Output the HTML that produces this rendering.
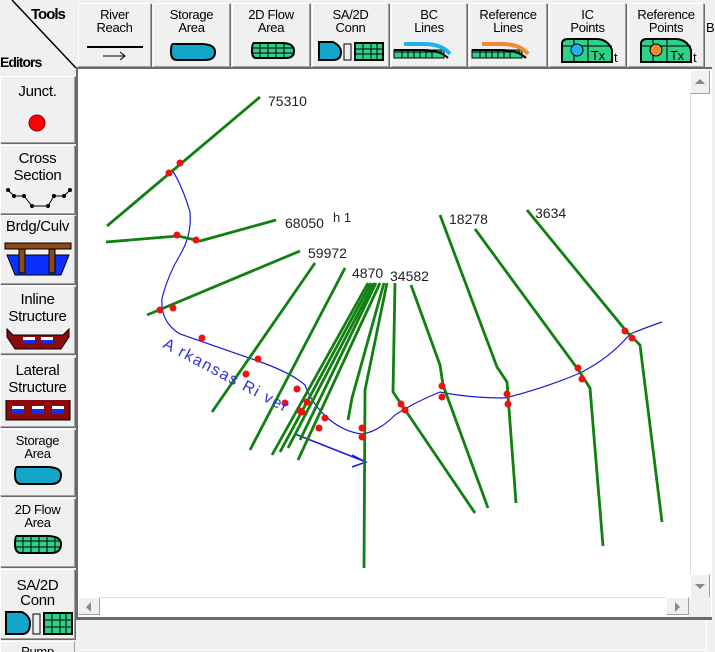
<!DOCTYPE html>
<html><head><meta charset="utf-8"><style>
html,body{margin:0;width:715px;height:652px;background:#f0f0f0;position:relative;overflow:hidden;font-family:"Liberation Sans",sans-serif;}
.b{position:absolute;background:#f0f0f0;border:1px solid #fff;border-right-color:#a0a0a0;border-bottom-color:#a0a0a0;box-shadow:1px 1px 0 #6a6a6a;text-align:center;font-size:13px;line-height:13px;color:#000;letter-spacing:-0.3px;overflow:hidden}
.t{position:absolute;left:0;right:0;top:4px}
svg{position:absolute}
</style></head><body>
<svg style="left:0;top:0" width="80" height="72"><line x1="12" y1="0" x2="76" y2="68" stroke="#000" stroke-width="1.5"/></svg>
<div style="position:absolute;left:31px;top:6px;font-weight:bold;font-size:15px;letter-spacing:-1px">Tools</div>
<div style="position:absolute;left:0;top:54px;font-weight:bold;font-size:14px;letter-spacing:-1px">Editors</div>

<div class="b" style="left:78px;top:3px;width:71px;height:62px"><div class="t">River<br>Reach</div><svg style="left:8px;top:40px" width="56" height="16"><line x1="0" y1="3" x2="56" y2="3" stroke="#000" stroke-width="2"/><path d="M16 12H38M33 8L38 12L33 16" stroke="#000" fill="none"/></svg></div>
<div class="b" style="left:153px;top:3px;width:75px;height:62px"><div class="t">Storage<br>Area</div><svg style="left:15px;top:36px" width="48" height="22"><path d="M4 4H32Q46 4 46 12Q46 20 36 20H8Q2 20 2 12Q2 4 4 4Z" fill="#13a6c8" stroke="#000" stroke-width="2"/></svg></div>
<div class="b" style="left:232px;top:3px;width:76px;height:62px"><div class="t">2D Flow<br>Area</div><svg style="left:17px;top:36px" width="46" height="20"><path d="M4 3H32Q44 3 44 11Q44 18 36 18H6Q2 18 2 11Q2 3 4 3Z" fill="#2fd08a" stroke="#000" stroke-width="2"/><path d="M2 8H44M2 13H44M10 3V18M18 3V18M26 3V18M34 3V18" stroke="#000"/></svg></div>
<div class="b" style="left:312px;top:3px;width:75px;height:62px"><div class="t">SA/2D<br>Conn</div><svg style="left:4px;top:36px" width="68" height="22"><path d="M2 2H16Q24 6 24 12Q24 20 16 20H2Z" fill="#13a6c8" stroke="#000" stroke-width="2"/><rect x="27" y="4" width="7" height="16" fill="#eee" stroke="#000"/><rect x="38" y="3" width="28" height="17" fill="#2fd08a" stroke="#000" stroke-width="2"/><path d="M38 9H66M38 14H66M46 3V20M54 3V20M60 3V20" stroke="#000"/></svg></div>
<div class="b" style="left:391px;top:3px;width:74px;height:62px"><div class="t">BC<br>Lines</div><svg style="left:0px;top:34px" width="74" height="24"><rect x="2" y="12" width="50" height="8" fill="#2fd08a" stroke="#000"/><path d="M2 14H50M10 12V20M16 12V20M22 12V20M28 12V20M34 12V20M40 12V20" stroke="#000"/><path d="M2 12H30Q48 12 56 20" stroke="#000" stroke-width="2" fill="none"/><path d="M12 6H32Q50 6 58 16" stroke="#20b0f0" stroke-width="4" fill="none"/></svg></div>
<div class="b" style="left:469px;top:3px;width:76px;height:62px"><div class="t">Reference<br>Lines</div><svg style="left:0px;top:34px" width="76" height="24"><rect x="2" y="12" width="50" height="8" fill="#2fd08a" stroke="#000"/><path d="M2 14H50M10 12V20M16 12V20M22 12V20M28 12V20M34 12V20M40 12V20" stroke="#000"/><path d="M2 12H30Q48 12 56 20" stroke="#000" stroke-width="2" fill="none"/><path d="M12 6H32Q50 6 58 16" stroke="#f08a30" stroke-width="4" fill="none"/></svg></div>
<div class="b" style="left:549px;top:3px;width:75px;height:62px"><div class="t">IC<br>Points</div><svg style="left:10px;top:32px" width="64" height="28"><path d="M2 26V8Q2 3 8 3H36Q48 3 52 14V26Z" fill="#2fd08a" stroke="#000" stroke-width="2"/><path d="M2 10H52M28 3V26M14 3V26" stroke="#000"/><circle cx="17" cy="14" r="6" fill="#20b0f0" stroke="#000"/><text x="31" y="24" font-size="13" font-family="Liberation Sans">Tx</text><text x="54" y="26" font-size="13" font-family="Liberation Sans">t</text></svg></div>
<div class="b" style="left:628px;top:3px;width:74px;height:62px"><div class="t">Reference<br>Points</div><svg style="left:10px;top:32px" width="64" height="28"><path d="M2 26V8Q2 3 8 3H36Q48 3 52 14V26Z" fill="#2fd08a" stroke="#000" stroke-width="2"/><path d="M2 10H52M28 3V26M14 3V26" stroke="#000"/><circle cx="17" cy="14" r="6" fill="#f08a30" stroke="#000"/><text x="31" y="24" font-size="13" font-family="Liberation Sans">Tx</text><text x="54" y="26" font-size="13" font-family="Liberation Sans">t</text></svg></div>
<div style="position:absolute;left:706px;top:20px;font-size:13px">B</div>

<div class="b" style="left:0;top:76px;width:73px;height:65px"><div class="t" style="top:8px;font-size:15px">Junct.</div><svg style="left:26px;top:36px" width="20" height="20"><circle cx="10" cy="10" r="8" fill="#f00" stroke="#900"/></svg></div>
<div class="b" style="left:0;top:145px;width:73px;height:67px"><div class="t" style="font-size:15px;line-height:17px">Cross<br>Section</div><svg style="left:3px;top:40px" width="68" height="26"><path d="M4 4L10 10H20L28 20H44L50 10H60L66 4" stroke="#000" fill="none"/><g fill="#000"><circle cx="4" cy="4" r="2"/><circle cx="10" cy="10" r="2"/><circle cx="20" cy="10" r="2"/><circle cx="28" cy="20" r="2"/><circle cx="44" cy="20" r="2"/><circle cx="50" cy="10" r="2"/><circle cx="60" cy="10" r="2"/><circle cx="66" cy="4" r="2"/></g></svg></div>
<div class="b" style="left:0;top:215px;width:73px;height:67px"><div class="t" style="font-size:15px">Brdg/Culv</div><svg style="left:2px;top:23px" width="70" height="38"><path d="M4 16H66L58 36H12Z" fill="#0a30ff" stroke="#000"/><rect x="2" y="4" width="66" height="6" fill="#8b4a1a" stroke="#000"/><rect x="16" y="10" width="6" height="24" fill="#8b4a1a" stroke="#000"/><rect x="46" y="10" width="6" height="24" fill="#8b4a1a" stroke="#000"/></svg></div>
<div class="b" style="left:0;top:286px;width:73px;height:66px"><div class="t" style="font-size:15px;line-height:17px">Inline<br>Structure</div><svg style="left:4px;top:40px" width="66" height="24"><path d="M2 2L8 8H58L64 2V10L56 22H10L2 10Z" fill="#8b0a0a" stroke="#000"/><rect x="18" y="10" width="12" height="6" fill="#fff"/><rect x="36" y="10" width="12" height="6" fill="#fff"/><rect x="18" y="13" width="12" height="3" fill="#0a30ff"/><rect x="36" y="13" width="12" height="3" fill="#0a30ff"/></svg></div>
<div class="b" style="left:0;top:357px;width:73px;height:68px"><div class="t" style="font-size:15px;line-height:17px">Lateral<br>Structure</div><svg style="left:3px;top:40px" width="68" height="26"><path d="M2 2V22H66V2" fill="#8b0a0a" stroke="#000"/><rect x="8" y="8" width="12" height="8" fill="#0a30ff"/><rect x="28" y="8" width="12" height="8" fill="#0a30ff"/><rect x="48" y="8" width="12" height="8" fill="#0a30ff"/><rect x="8" y="8" width="12" height="3" fill="#fff"/><rect x="28" y="8" width="12" height="3" fill="#fff"/><rect x="48" y="8" width="12" height="3" fill="#fff"/></svg></div>
<div class="b" style="left:0;top:429px;width:73px;height:65px"><div class="t">Storage<br>Area</div><svg style="left:12px;top:34px" width="50" height="22"><path d="M4 3H34Q48 3 48 11Q48 20 38 20H8Q2 20 2 11Q2 3 4 3Z" fill="#13a6c8" stroke="#000" stroke-width="2"/></svg></div>
<div class="b" style="left:0;top:498px;width:73px;height:67px"><div class="t">2D Flow<br>Area</div><svg style="left:12px;top:34px" width="50" height="22"><path d="M4 3H34Q48 3 48 11Q48 20 38 20H8Q2 20 2 11Q2 3 4 3Z" fill="#2fd08a" stroke="#000" stroke-width="2"/><path d="M2 8H48M2 14H48M10 3V20M18 3V20M26 3V20M34 3V20M42 3V20" stroke="#000"/></svg></div>
<div class="b" style="left:0;top:569px;width:73px;height:68px"><div class="t" style="top:8px;font-size:15px;line-height:15px">SA/2D<br>Conn</div><svg style="left:3px;top:40px" width="70" height="26"><path d="M2 2H18Q26 6 26 13Q26 24 18 24H2Z" fill="#13a6c8" stroke="#000" stroke-width="2"/><rect x="29" y="4" width="7" height="20" fill="#eee" stroke="#000"/><rect x="40" y="3" width="28" height="21" fill="#2fd08a" stroke="#000" stroke-width="2"/><path d="M40 10H68M40 17H68M48 3V24M56 3V24M62 3V24" stroke="#000"/></svg></div>
<div class="b" style="left:0;top:641px;width:73px;height:11px;border-bottom:none;box-shadow:none"><div class="t" style="top:3px">Pump</div></div>

<div style="position:absolute;left:76px;top:67px;width:634px;height:550px;border-top:2px solid #6a6a6a;border-left:2px solid #6a6a6a;background:#fff"></div>
<div style="position:absolute;left:690px;top:69px;width:20px;height:528px;background:#fff;border-left:1px solid #ddd"></div>
<div class="b" style="left:690px;top:70px;width:18px;height:22px;box-shadow:none"><svg style="left:4px;top:8px" width="10" height="6"><path d="M0 5L5 0L10 5Z" fill="#888"/></svg></div>
<div class="b" style="left:690px;top:574px;width:18px;height:22px;box-shadow:none"><svg style="left:4px;top:9px" width="10" height="6"><path d="M0 0L5 5L10 0Z" fill="#888"/></svg></div>
<div style="position:absolute;left:78px;top:597px;width:612px;height:18px;background:#fff;border-top:1px solid #ddd"></div>
<div class="b" style="left:78px;top:597px;width:20px;height:16px;box-shadow:none"><svg style="left:7px;top:4px" width="6" height="10"><path d="M5 0L0 5L5 10Z" fill="#888"/></svg></div>
<div class="b" style="left:666px;top:597px;width:21px;height:16px;box-shadow:none"><svg style="left:8px;top:4px" width="6" height="10"><path d="M0 0L5 5L0 10Z" fill="#888"/></svg></div>
<div style="position:absolute;left:689px;top:597px;width:22px;height:20px;background:#f0f0f0"></div>
<div style="position:absolute;left:76px;top:617px;width:636px;height:3px;background:#6a6a6a"></div>
<div style="position:absolute;left:78px;top:620px;width:628px;height:29px;background:#f0f0f0;border-bottom:1px solid #fff;border-right:1px solid #fff"></div>

<svg style="left:0;top:0" width="715" height="652">
<g fill="none" stroke="#1a1ae0" stroke-width="1.2">
<path d="M172 170Q182 185 190 212Q192 235 180 255Q168 275 162 298Q160 322 180 334Q215 346 255 360Q290 372 305 385Q312 405 330 420Q345 432 362 434Q378 432 395 415Q415 402 440 392Q470 398 505 398Q545 388 580 373Q610 358 630 334Q650 326 662 322"/>
<path d="M295 434L366 462M352 455L366 462L352 467" stroke-width="1.5"/>
</g>
<g fill="none" stroke="#108010" stroke-width="2.8">
<path d="M260 97L107 226"/>
<path d="M106 242L178 236L200 241L276 220"/>
<path d="M300 251L147 315"/>
<path d="M315 263L212 412"/>
<path d="M345 268L250 450"/>
<path d="M368 283L272 455"/>
<path d="M371 283L280 452"/>
<path d="M374 283L288 448"/>
<path d="M376 283L300 440"/>
<path d="M380 283L298 460"/>
<path d="M384 283L352 398L348 420"/>
<path d="M387 283L365 390L364 568"/>
<path d="M395 283L393 392L475 513"/>
<path d="M411 285L440 365L443 385L488 508"/>
<path d="M440 215L497 367L507 382L516 503"/>
<path d="M475 229L577 368L590 388L603 546"/>
<path d="M527 210L627 332L640 345L662 522"/>
</g>
<g fill="#f01010">
<circle cx="180" cy="163" r="3.5"/><circle cx="169" cy="173" r="3.5"/>
<circle cx="177" cy="235" r="3.5"/><circle cx="196" cy="240" r="3.5"/>
<circle cx="160" cy="310" r="3.5"/><circle cx="173" cy="308" r="3.5"/>
<circle cx="202" cy="338" r="3.5"/>
<circle cx="258" cy="359" r="3.5"/><circle cx="246" cy="374" r="3.5"/>
<circle cx="297" cy="389" r="3.5"/><circle cx="285" cy="403" r="3.5"/>
<circle cx="307" cy="402" r="3.5"/><circle cx="302" cy="412" r="3.5"/><circle cx="300" cy="411" r="3.5"/>
<circle cx="325" cy="418" r="3.5"/><circle cx="319" cy="428" r="3.5"/>
<circle cx="362" cy="428" r="3.5"/><circle cx="362" cy="437" r="3.5"/>
<circle cx="401" cy="404" r="3.5"/><circle cx="405" cy="410" r="3.5"/>
<circle cx="442" cy="386" r="3.5"/><circle cx="442" cy="397" r="3.5"/>
<circle cx="507" cy="394" r="3.5"/><circle cx="508" cy="404" r="3.5"/>
<circle cx="578" cy="368" r="3.5"/><circle cx="582" cy="379" r="3.5"/>
<circle cx="625" cy="331" r="3.5"/><circle cx="632" cy="338" r="3.5"/>
</g>
<g font-family="Liberation Sans" font-size="14" fill="#222">
<text x="268" y="106">75310</text>
<text x="285" y="228">68050</text><text x="333" y="222" font-size="13">h 1</text>
<text x="308" y="258">59972</text>
<text x="352" y="278">4870</text><text x="390" y="281">34582</text>
<text x="449" y="224">18278</text>
<text x="535" y="218">3634</text>
<text x="162" y="347" fill="#3030e0" transform="rotate(28 162 347)" font-size="16" letter-spacing="1.5">A  rkansas Ri  ver</text>
</g>
</svg>
</body></html>
